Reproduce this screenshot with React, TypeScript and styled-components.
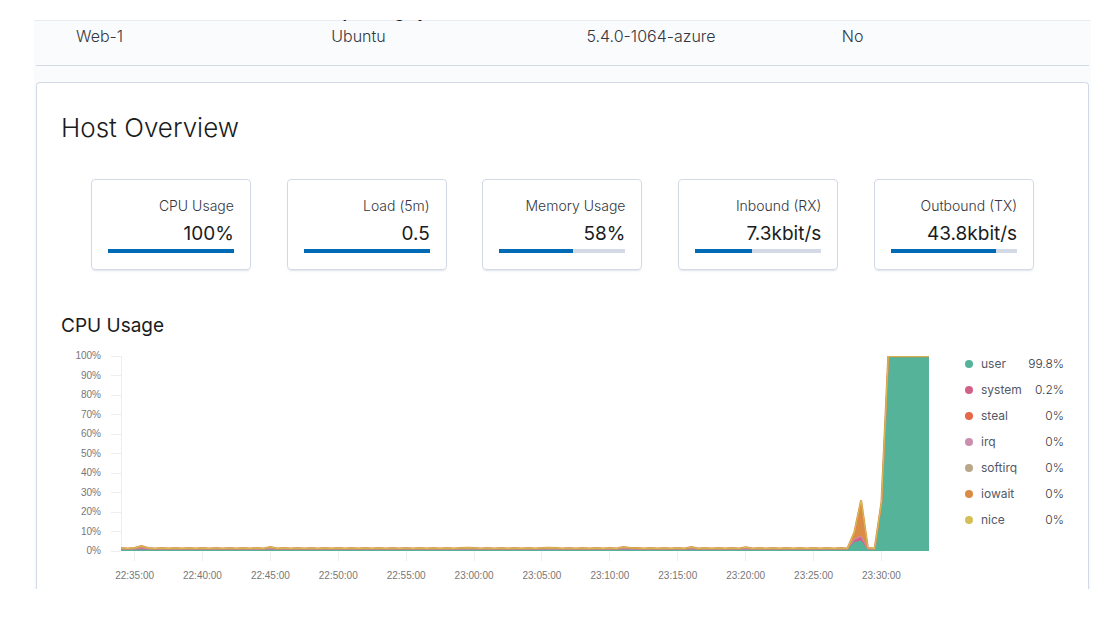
import React from "react";
import styled, { createGlobalStyle } from "styled-components";

const GlobalStyle = createGlobalStyle`
  *, *::before, *::after { box-sizing: border-box; }
  body {
    margin: 0;
    background: #fff;
    color: #343741;
    font-family: Inter, "Liberation Sans", sans-serif;
    font-size: 16px;
    line-height: 24px;
  }
  h1, h2, dl, dd, ul, p { margin: 0; padding: 0; }
`;

const Page = styled.main`
  margin: 20px 14px 0 34px;
  padding: 0 2px;
  background: #fafbfd;
  box-shadow: inset 0 1px 0 #e9ecf3;
  overflow: hidden;
`;

const HostFacts = styled.dl`
  display: grid;
  grid-template-columns: repeat(4, 1fr);
  padding: 0 16px 17px;
  border-bottom: 1px solid #d3dae6;
`;

const Fact = styled.div`
  padding-left: 24px;
`;

const FactName = styled.dt`
  display: flex;
  align-items: flex-end;
  height: 4px;
  color: #1a1c21;
  font-size: 15px;
  font-weight: 700;
  line-height: 22px;
`;

const FactValue = styled.dd`
  font-weight: 300;
`;

const Panel = styled.section`
  margin-top: 16px;
  padding: 24px 24px 0;
  background: #fff;
  border: 1px solid #d3dae6;
  border-bottom: 0;
  border-radius: 4px 4px 0 0;
  box-shadow: 0 2px 2px -1px rgba(152, 162, 179, 0.3);
`;

const PanelTitle = styled.h1`
  color: #1a1c21;
  font-size: 26px;
  font-weight: 300;
  line-height: 42px;
`;

const Stats = styled.div`
  display: flex;
  flex-wrap: wrap;
  justify-content: space-around;
  margin: 30px 12px 0;
`;

const StatCard = styled.article`
  width: 160px;
  padding: 16px;
  border: 1px solid #d3dae6;
  border-radius: 4px;
  box-shadow: 0 2px 2px -1px rgba(152, 162, 179, 0.3);
  text-align: right;
`;

const StatLabel = styled.p`
  font-size: 14px;
  font-weight: 300;
  line-height: 20px;
`;

const StatValue = styled.p`
  margin-top: 2px;
  color: #1a1c21;
  font-size: 19px;
  line-height: 31px;
`;

const Meter = styled.div`
  height: 4px;
  background: #d3dae6;
`;

const MeterFill = styled.div`
  height: 100%;
  background: #006bb4;
`;

const ChartTitle = styled.h2`
  margin-top: 44px;
  color: #1a1c21;
  font-size: 19px;
  font-weight: 400;
  line-height: 24px;
`;

const ChartRow = styled.div`
  display: flex;
  padding-top: 18px;
`;

const PlotArea = styled.svg`
  flex: 1;
  min-width: 0;
  height: 233px;
  margin-left: 60px;
  overflow: visible;
  font-family: "Liberation Sans", Arial, sans-serif;
  font-size: 10px;
  fill: #777;
`;

const Legend = styled.ul`
  width: 99px;
  margin: -5px 0 0 36px;
  list-style: none;
`;

const LegendItem = styled.li`
  display: flex;
  align-items: center;
  height: 26px;
  color: #535966;
  font-size: 12px;
`;

const LegendDot = styled.span<{ $color: string }>`
  width: 8px;
  height: 8px;
  margin-right: 8px;
  border-radius: 50%;
  background: ${(p) => p.$color};
`;

const LegendValue = styled.span`
  margin-left: auto;
  color: #343741;
  font-weight: 300;
`;

const facts = [
  { name: "", value: "Web-1" },
  { name: "Operating System", value: "Ubuntu" },
  { name: "", value: "5.4.0-1064-azure" },
  { name: "", value: "No" },
];

const stats = [
  { label: "CPU Usage", value: "100%", fill: 100 },
  { label: "Load (5m)", value: "0.5", fill: 100 },
  { label: "Memory Usage", value: "58%", fill: 58.6 },
  { label: "Inbound (RX)", value: "7.3kbit/s", fill: 45.2 },
  { label: "Outbound (TX)", value: "43.8kbit/s", fill: 83.3 },
];

const legend = [
  { name: "user", value: "99.8%", color: "#54b399" },
  { name: "system", value: "0.2%", color: "#d36086" },
  { name: "steal", value: "0%", color: "#e7664c" },
  { name: "irq", value: "0%", color: "#ca8eae" },
  { name: "softirq", value: "0%", color: "#b9a888" },
  { name: "iowait", value: "0%", color: "#da8b45" },
  { name: "nice", value: "0%", color: "#d6bf57" },
];

const times = [
  "22:35:00", "22:40:00", "22:45:00", "22:50:00", "22:55:00", "23:00:00",
  "23:05:00", "23:10:00", "23:15:00", "23:20:00", "23:25:00", "23:30:00",
];

/* One sample each 30 seconds; stacked tops in percent: user, system, iowait. */
const LAST = 119;
const PLOT_HEIGHT = 195;
const bumps: Record<number, number> = { 3: 1.3, 22: 0.6, 51: 0.4, 63: 0.4, 74: 0.6, 75: 0.3, 84: 0.5, 92: 0.4 };
const peaks: Record<number, [number, number, number]> = {
  108: [4.6, 6, 9.5],
  109: [5.4, 7.6, 26],
  112: [24.5, 24.7, 25],
};
const samples: [number, number, number][] = Array.from({ length: LAST + 1 }, (_, i) => {
  if (peaks[i]) return peaks[i];
  if (i >= 113) return [99.6, 99.8, 99.9];
  const bump = bumps[i] ?? 0;
  const wobble = i % 2 === 0 ? 0.2 : 0;
  return [0.8, 1 + bump / 2, 1.3 + bump + wobble];
});

const topLine = (band: number) => samples.map((s, i) => `${i},${100 - s[band]}`).join(" ");
const area = (band: number) => `0,100 ${topLine(band)} ${LAST},100`;

function CpuPlot() {
  return (
    <PlotArea role="img" aria-label="CPU usage over time">
      <g stroke="#eee" shapeRendering="crispEdges">
        <line x1="0" x2="0" y1="0" y2={PLOT_HEIGHT} />
        {Array.from({ length: 11 }, (_, i) => (
          <line key={i} x1="-10" x2="0" y1={i * 19.5} y2={i * 19.5} />
        ))}
        {times.map((t, i) => (
          <line key={t} x1={`${((2 + i * 10) / LAST) * 100}%`} x2={`${((2 + i * 10) / LAST) * 100}%`} y1={PLOT_HEIGHT} y2={PLOT_HEIGHT + 10} />
        ))}
      </g>
      <g textAnchor="end">
        {Array.from({ length: 11 }, (_, i) => (
          <text key={i} x="-20" y={i * 19.5 + 3}>{`${100 - i * 10}%`}</text>
        ))}
      </g>
      <g textAnchor="middle">
        {times.map((t, i) => (
          <text key={t} x={`${((2 + i * 10) / LAST) * 100}%`} y={PLOT_HEIGHT + 28}>{t}</text>
        ))}
      </g>
      <svg width="100%" height={PLOT_HEIGHT} viewBox={`0 0 ${LAST} 100`} preserveAspectRatio="none">
        <polygon points={area(2)} fill="#da8b45" />
        <polygon points={area(1)} fill="#d36086" />
        <polygon points={area(0)} fill="#54b399" />
        <g fill="none" strokeLinejoin="bevel">
          <polyline points={topLine(1)} stroke="#ca8eae" vectorEffect="non-scaling-stroke" />
          <polyline points={topLine(2)} stroke="#da8b45" strokeWidth="2" vectorEffect="non-scaling-stroke" />
          <polyline points={topLine(2)} stroke="#d6bf57" vectorEffect="non-scaling-stroke" />
        </g>
      </svg>
    </PlotArea>
  );
}

export default function App() {
  return (
    <>
      <GlobalStyle />
      <Page>
        <HostFacts>
          {facts.map((f) => (
            <Fact key={f.value}>
              <FactName>{f.name}</FactName>
              <FactValue>{f.value}</FactValue>
            </Fact>
          ))}
        </HostFacts>
        <Panel>
          <PanelTitle>Host Overview</PanelTitle>
          <Stats>
            {stats.map((s) => (
              <StatCard key={s.label}>
                <StatLabel>{s.label}</StatLabel>
                <StatValue>{s.value}</StatValue>
                <Meter>
                  <MeterFill style={{ width: `${s.fill}%` }} />
                </Meter>
              </StatCard>
            ))}
          </Stats>
          <ChartTitle>CPU Usage</ChartTitle>
          <ChartRow>
            <CpuPlot />
            <Legend>
              {legend.map((l) => (
                <LegendItem key={l.name}>
                  <LegendDot $color={l.color} />
                  {l.name}
                  <LegendValue>{l.value}</LegendValue>
                </LegendItem>
              ))}
            </Legend>
          </ChartRow>
        </Panel>
      </Page>
    </>
  );
}
